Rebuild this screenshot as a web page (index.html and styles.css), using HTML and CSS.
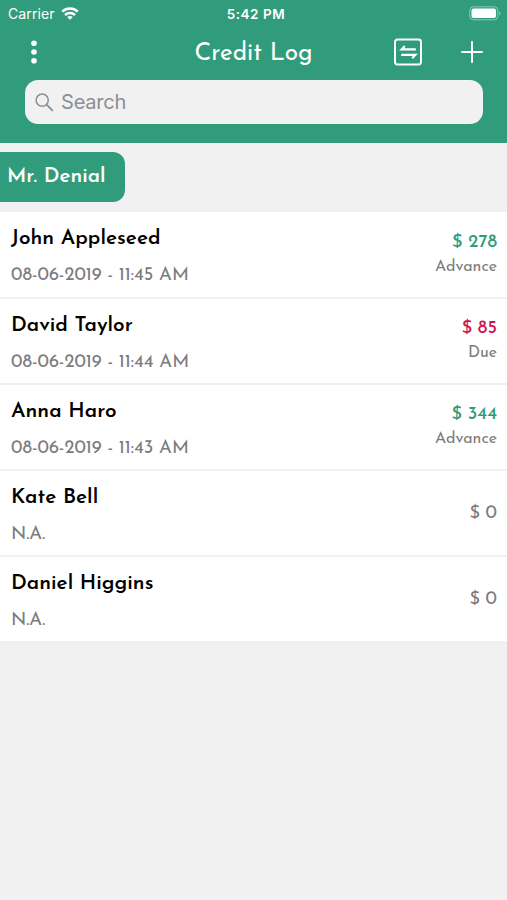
FILE: index.html
```html
<!DOCTYPE html>
<html>
<head>
  <meta charset="utf-8">
  <title>Credit Log</title>
  <link rel="stylesheet" href="styles.css">
</head>
<body>

<div class="header">
  <div class="status">
    <div class="carrier">
      <span>Carrier</span>
      <svg width="18" height="13" viewBox="0 0 18 13" fill="none" stroke="#fff" stroke-width="2.4">
        <path d="M1.2 4.7C5.5.5 12.5.5 16.8 4.7"/>
        <path d="M4 8c2.8-2.6 7.2-2.6 10 0"/>
        <path d="M9 12.8L6.2 10c1.6-1.4 4-1.4 5.6 0z" fill="#fff" stroke="none"/>
      </svg>
    </div>
    <b class="time">5:42 PM</b>
    <svg class="battery" width="33" height="15" viewBox="0 0 33 15">
      <rect x=".8" y=".8" width="28" height="13" rx="3.5" fill="none" stroke="#fff" stroke-opacity=".45"/>
      <rect x="2.5" y="2.5" width="24.5" height="9.6" rx="2" fill="#fff"/>
      <path d="M30.2 5.2c1.8.8 1.8 3.6 0 4.4z" fill="#fff" fill-opacity=".45"/>
    </svg>
  </div>

  <div class="navbar">
    <svg class="dots" width="8" height="26" viewBox="0 0 8 26" fill="#fff">
      <circle cx="4" cy="4.2" r="2.8"/>
      <circle cx="4" cy="13" r="2.8"/>
      <circle cx="4" cy="21.8" r="2.8"/>
    </svg>
    <h1 class="title">Credit Log</h1>
    <div class="actions">
      <svg width="30" height="28" viewBox="0 0 30 28" fill="none" stroke="#fff" stroke-width="1.9">
        <rect x="2" y="1.5" width="26" height="25" rx="2.5"/>
        <path d="M22.8 11.4H8.6l3.2-3.4M8.2 16.9h14.2l-3.2 3.4" stroke-width="2.1"/>
      </svg>
      <svg width="22" height="22" viewBox="0 0 22 22" stroke="#fff" stroke-width="2">
        <path d="M11 .3v21.4M.3 11h21.4"/>
      </svg>
    </div>
  </div>

  <div class="search">
    <svg width="19" height="19" viewBox="0 0 19 19" fill="none" stroke="#8e8e93" stroke-width="1.5">
      <circle cx="7.2" cy="7.2" r="6.1"/>
      <path d="M11.6 11.6l6.2 6.2" stroke-width="1.9"/>
    </svg>
    <span>Search</span>
  </div>
</div>

<div class="owner"><span>Mr. Denial</span></div>

<div class="list">
  <div class="row">
    <div class="person">
      <div class="name">John Appleseed</div>
      <div class="date">08-06-2019 - 11:45 AM</div>
    </div>
    <div class="balance">
      <div class="amount advance">$ 278</div>
      <div class="type">Advance</div>
    </div>
  </div>
  <div class="row">
    <div class="person">
      <div class="name">David Taylor</div>
      <div class="date">08-06-2019 - 11:44 AM</div>
    </div>
    <div class="balance">
      <div class="amount due">$ 85</div>
      <div class="type">Due</div>
    </div>
  </div>
  <div class="row">
    <div class="person">
      <div class="name">Anna Haro</div>
      <div class="date">08-06-2019 - 11:43 AM</div>
    </div>
    <div class="balance">
      <div class="amount advance">$ 344</div>
      <div class="type">Advance</div>
    </div>
  </div>
  <div class="row">
    <div class="person">
      <div class="name">Kate Bell</div>
      <div class="date">N.A.</div>
    </div>
    <div class="balance">
      <div class="amount">$ 0</div>
    </div>
  </div>
  <div class="row">
    <div class="person">
      <div class="name">Daniel Higgins</div>
      <div class="date">N.A.</div>
    </div>
    <div class="balance">
      <div class="amount">$ 0</div>
    </div>
  </div>
</div>

</body>
</html>
```
FILE: styles.css
```css
* {
  box-sizing: border-box;
}

body {
  margin: 0;
  background-color: #f1f1f1;
  font-family: "Josefin Sans", Lato, sans-serif;
  color: #000;
  white-space: nowrap;
}

svg {
  display: block;
  flex: none;
}

.header {
  height: 143px;
  background-color: #319c7b;
  color: #fff;
}

/* status bar */
.status {
  display: grid;
  grid-template-columns: 1fr auto 1fr;
  align-items: center;
  height: 27px;
  padding: 0 5px 0 8px;
  font-family: Inter, sans-serif;
  font-size: 14px;
}

.carrier {
  display: flex;
  align-items: center;
  gap: 6px;
  letter-spacing: 0.1px;
}

.time {
  margin-left: 2px;
  font-size: 13.5px;
  font-weight: 600;
  letter-spacing: 0.55px;
}

.battery {
  justify-self: end;
}

/* title and buttons */
.navbar {
  display: grid;
  grid-template-columns: 1fr auto 1fr;
  align-items: center;
  height: 50px;
  padding: 0 24px 0 30px;
}

.title {
  margin: 3px 6px 0 0;
  font-size: 24.3px;
  font-weight: 400;
}

.actions {
  display: flex;
  align-items: center;
  justify-content: flex-end;
  gap: 38px;
}

.search {
  display: flex;
  align-items: center;
  gap: 7px;
  height: 44px;
  margin: 3px 24px 0 25px;
  padding-left: 10px;
  border-radius: 13px;
  background-color: #f1f1f1;
  color: #8e8e93;
  font-family: Inter, sans-serif;
  font-size: 20px;
  letter-spacing: -0.2px;
}

.owner {
  display: flex;
  align-items: center;
  width: 125px;
  height: 50px;
  margin: 9px 0;
  padding: 0 0 2px 7px;
  border-radius: 0 12px 12px 0;
  background-color: #319c7b;
  color: #fff;
  font-size: 20.7px;
  font-weight: 600;
}

/* customers */
.list {
  background-color: #fff;
}

.row {
  display: flex;
  align-items: center;
  justify-content: space-between;
  height: 86px;
  padding: 0 10px 0 11px;
  border-top: 2px solid #f1f1f1;
}

.row:first-child {
  border-top-width: 1px;
}

.person {
  padding-top: 6px;
}

.name {
  margin-bottom: 13px;
  font-size: 20.8px;
  font-weight: 600;
  line-height: 24px;
}

.date {
  color: #7b7b7e;
  font-size: 18.3px;
  line-height: 24px;
}

.balance {
  text-align: right;
  color: #7b7b7e;
}

.amount {
  font-size: 18.3px;
  line-height: 25px;
}

.type {
  font-size: 16px;
  line-height: 25px;
}

.advance {
  color: #319c7b;
  font-weight: 500;
}

.due {
  color: #cf1650;
  font-weight: 500;
}
```
